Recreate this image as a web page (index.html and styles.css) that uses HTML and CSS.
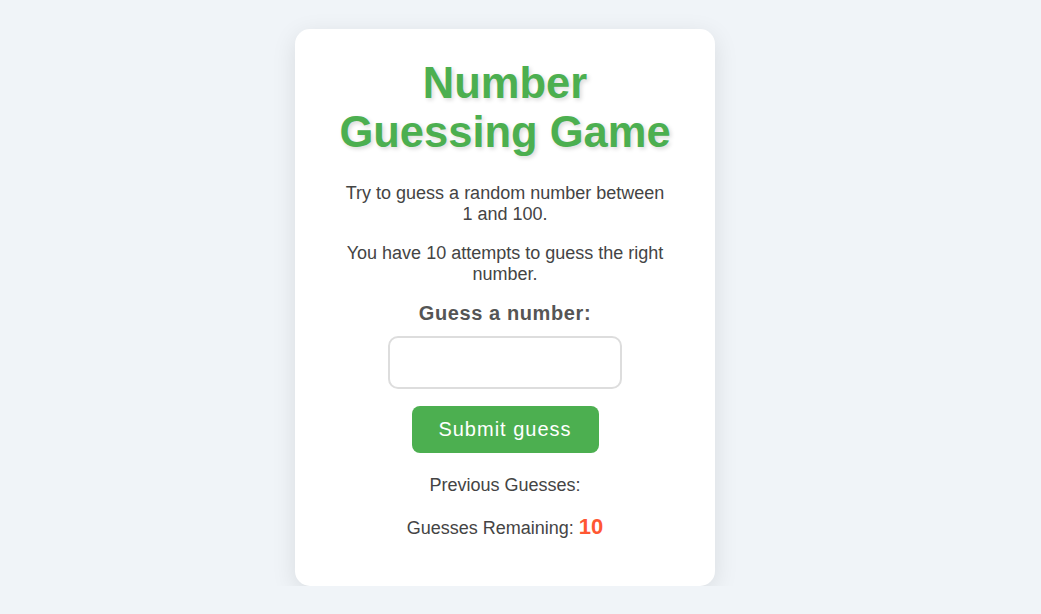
FILE: index.html
```html
<!DOCTYPE html>
<html lang="en">
<head>
  <meta charset="UTF-8" />
  <meta name="viewport" content="width=device-width, initial-scale=1.0"/>
  <title>Number Guessing Game</title>
  <link rel="stylesheet" href="styles.css">
</head>
<body>
  <div class="container">
    <h1>Number Guessing Game</h1>
    <p>Try to guess a random number between 1 and 100.</p>
    <p>You have 10 attempts to guess the right number.</p>

    <form id="guessForm">
      <label for="guessField">Guess a number:</label>
      <input type="number" id="guessField" min="1" max="100" />
      <button type="submit">Submit guess</button>
    </form>

    <div class="results">
      <p>Previous Guesses: <span id="guesses"></span></p>
      <p>Guesses Remaining: <span id="remaining" class="remaining">10</span></p>
    </div>
  </div>
</body>
</html>
```

FILE: styles.css
```css
body {
  font-family: "Liberation Sans", Arial, sans-serif;
  background-color: #f0f4f8;
  margin: 0;
  padding: 29px 31px 0 0;
  display: flex;
  justify-content: center;
}

.container {
  width: 420px;
  box-sizing: border-box;
  padding: 30px 40px 46px;
  background: #fff;
  border-radius: 15px;
  box-shadow: 0 6px 24px rgba(0, 0, 0, 0.1);
  text-align: center;
}

h1 {
  font-size: 43.5px;
  line-height: 49px;
  color: #4caf50;
  margin: 0 0 26px;
  text-shadow: 2px 2px 4px rgba(0, 0, 0, 0.15);
}

p {
  font-size: 18px;
  color: #444;
  margin: 0 6px 18px;
}

form {
  display: flex;
  flex-direction: column;
  align-items: center;
}

label {
  font-size: 20px;
  font-weight: bold;
  letter-spacing: 0.6px;
  color: #555;
  margin-top: -1px;
}

input {
  width: 234px;
  height: 53px;
  box-sizing: border-box;
  margin-top: 11px;
  padding: 10px;
  font-size: 18px;
  border: 2px solid #ddd;
  border-radius: 10px;
  text-align: center;
  outline: none;
}

button {
  margin-top: 17px;
  width: 187px;
  height: 47px;
  background: #4caf50;
  color: #fff;
  border: none;
  border-radius: 8px;
  font-family: inherit;
  font-size: 20px;
  letter-spacing: 1px;
  cursor: pointer;
}

button:hover {
  background: #43a047;
}

.results {
  margin-top: 22px;
}

.results p:last-child {
  margin-bottom: 0;
}

.remaining {
  font-size: 22px;
  font-weight: bold;
  color: #ff5733;
}
```
